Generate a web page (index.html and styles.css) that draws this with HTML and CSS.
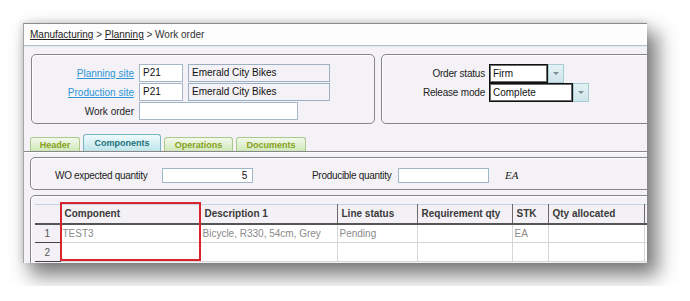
FILE: index.html
```html
<!DOCTYPE html>
<html>
<head>
<meta charset="utf-8">
<link rel="stylesheet" href="styles.css">
</head>
<body>
<div class="window">
  <div class="crumbs"><a>Manufacturing</a> &gt; <a>Planning</a> &gt; Work order</div>
  <div class="top">
    <div class="box site-box">
      <div class="row"><a class="lbl link">Planning site</a><span class="inp code">P21</span><span class="inp desc">Emerald City Bikes</span></div>
      <div class="row"><a class="lbl link">Production site</a><span class="inp code">P21</span><span class="inp desc">Emerald City Bikes</span></div>
      <div class="row"><span class="lbl">Work order</span><span class="inp wo"></span></div>
    </div>
    <div class="box status-box">
      <div class="row2"><span class="lbl">Order status</span><span class="combo"><span class="val firm">Firm</span><span class="btn"><span class="arrow"></span></span></span></div>
      <div class="row2"><span class="lbl">Release mode</span><span class="combo"><span class="val complete">Complete</span><span class="btn"><span class="arrow"></span></span></span></div>
    </div>
  </div>
  <div class="tabs">
    <div class="tab t-header">Header</div>
    <div class="tab active t-comp">Components</div>
    <div class="tab t-ops">Operations</div>
    <div class="tab t-docs">Documents</div>
  </div>
  <div class="box qty-box">
    <span class="q-lbl1">WO expected quantity</span>
    <span class="inp q-inp num-val">5</span>
    <span class="q-lbl2">Producible quantity</span>
    <span class="inp q-inp"></span>
    <span class="unit">EA</span>
  </div>
  <div class="box grid-box">
    <table>
      <colgroup>
        <col class="c-num"><col class="c-comp"><col class="c-desc"><col class="c-line"><col class="c-req"><col class="c-stk"><col class="c-alloc"><col class="c-more">
      </colgroup>
      <tr class="head"><th class="corner"></th><th>Component</th><th>Description 1</th><th>Line status</th><th>Requirement qty</th><th>STK</th><th>Qty allocated</th><th></th></tr>
      <tr><td class="num">1</td><td>TEST3</td><td>Bicycle, R330, 54cm, Grey</td><td>Pending</td><td></td><td>EA</td><td></td><td></td></tr>
      <tr><td class="num">2</td><td></td><td></td><td></td><td></td><td></td><td></td><td></td></tr>
    </table>
  </div>
  <div class="highlight"></div>
</div>
</body>
</html>
```
FILE: styles.css
```css
body {
  margin: 0;
  padding: 23px;
  background: #ffffff;
  font-family: "Liberation Sans", Arial, sans-serif;
}

.window {
  position: relative;
  width: 623px;
  height: 239px;
  border-top: 1px solid #8c8c8c;
  border-left: 1px solid #a4a4a4;
  background: #f4f2f6;
  overflow: hidden;
  box-shadow: 9px 11px 18px 2px rgba(0, 0, 0, 0.5), -1px -1px 7px rgba(0, 0, 0, 0.14);
}

.crumbs {
  height: 21px;
  line-height: 21px;
  padding-left: 6px;
  background: #fdfdfd;
  border-bottom: 1px solid #b5c4cf;
  box-shadow: 0 1px 0 #e2e9ee;
  font-size: 10px;
  color: #333;
}

.crumbs a {
  color: #222;
  text-decoration: underline;
}

.top {
  display: flex;
  gap: 6px;
  margin: 8px 0 0 7px;
}

.box {
  border: 1px solid #858585;
  border-radius: 5px;
  box-shadow: inset 1px 1px 0 #ffffff;
  box-sizing: border-box;
}

.site-box {
  flex: none;
  width: 344px;
  height: 70px;
  padding-top: 9px;
  display: flex;
  flex-direction: column;
  gap: 1px;
}

.status-box {
  flex: none;
  width: 300px;
  height: 70px;
  padding-top: 9px;
  display: flex;
  flex-direction: column;
}

.row {
  display: flex;
  align-items: center;
  height: 18px;
}

.row2 {
  display: flex;
  align-items: center;
  height: 19px;
}

.lbl {
  flex: none;
  width: 102px;
  margin-right: 5px;
  text-align: right;
  font-size: 10px;
  color: #222;
}

.link {
  color: #2b95d6;
  text-decoration: underline;
}

.status-box .lbl {
  width: 103px;
  margin-right: 4px;
  letter-spacing: -0.2px;
}

.inp {
  flex: none;
  box-sizing: border-box;
  height: 18px;
  line-height: 16px;
  border: 1px solid #a3b7c8;
  background: #ffffff;
  font-size: 10px;
  padding-left: 3px;
  color: #111;
}

.code {
  width: 44px;
  margin-right: 5px;
}

.desc {
  width: 142px;
  background: #f4f2f6;
  border-color: #9bb0c3;
}

.wo {
  width: 159px;
}

.combo {
  display: flex;
  height: 19px;
}

.val {
  box-sizing: border-box;
  height: 19px;
  line-height: 17px;
  border: 1px solid #111;
  box-shadow: inset 0 0 0 1px #6a6a6a;
  background: #ffffff;
  font-size: 10px;
  padding-left: 3px;
  color: #111;
}

.firm {
  width: 59px;
}

.complete {
  width: 84px;
}

.btn {
  box-sizing: border-box;
  width: 16px;
  height: 19px;
  border: 1px solid #a9ccd4;
  background: linear-gradient(#e3f1f4, #cfe5ea);
  display: flex;
  align-items: center;
  justify-content: center;
}

.arrow {
  width: 0;
  height: 0;
  border-left: 3px solid transparent;
  border-right: 3px solid transparent;
  border-top: 3px solid #7d8c92;
}

.tabs {
  display: flex;
  align-items: flex-end;
  gap: 3px;
  height: 17px;
  margin-top: 10px;
  padding-left: 6px;
  border-bottom: 1px solid #888;
  box-shadow: 0 1px 0 #ffffff;
}

.tab {
  box-sizing: border-box;
  height: 14px;
  border: 1px solid #a9c98d;
  border-bottom: none;
  border-radius: 3px 3px 0 0;
  background: linear-gradient(#f3f9ec, #cfe7b8);
  color: #86a11b;
  font-weight: bold;
  font-size: 9px;
  display: flex;
  align-items: center;
  justify-content: center;
}

.tab.active {
  height: 17px;
  border-color: #76b6c0;
  background: linear-gradient(#f0fbfd, #bde4ea);
  color: #22707a;
}

.t-header { width: 50px; }
.t-comp { width: 78px; }
.t-ops { width: 69px; }
.t-docs { width: 70px; }

.qty-box {
  display: flex;
  align-items: flex-start;
  width: 640px;
  height: 33px;
  margin: 5px 0 0 6px;
  padding: 10px 0 0 24px;
  border-radius: 5px 0 0 5px;
  font-size: 10px;
  letter-spacing: -0.3px;
  color: #222;
}

.q-lbl1 {
  width: 107px;
  line-height: 15px;
}

.q-lbl2 {
  width: 86px;
  margin-left: 59px;
  line-height: 15px;
}

.q-inp {
  width: 91px;
  height: 15px;
  line-height: 13px;
  border-color: #9fb6c8;
}

.num-val {
  text-align: right;
  padding-right: 5px;
}

.unit {
  margin-left: 16px;
  font-family: "Liberation Serif", "Times New Roman", serif;
  font-style: italic;
  font-size: 11px;
  line-height: 15px;
  letter-spacing: 0;
  color: #222;
}

.grid-box {
  width: 640px;
  height: 90px;
  margin: 5px 0 0 6px;
  padding: 8px 0 0 4px;
  border-radius: 5px 0 0 0;
}

table {
  border-collapse: collapse;
  table-layout: fixed;
  width: 709px;
  font-size: 10px;
}

.c-num { width: 25px; }
.c-comp { width: 140px; }
.c-desc { width: 137px; }
.c-line { width: 80px; }
.c-req { width: 95px; }
.c-stk { width: 36px; }
.c-alloc { width: 96px; }
.c-more { width: 100px; }

tr {
  height: 19px;
}

th {
  background: #f3f1f5;
  border-top: 1px solid #c4d4e2;
  border-right: 1px solid #6a6a6a;
  border-bottom: 2px solid #555;
  text-align: left;
  padding: 0 4px;
  color: #3a3a3a;
  font-weight: bold;
  white-space: nowrap;
  overflow: hidden;
}

th.corner {
  border-right: 1px solid #9a9a9a;
}

td {
  background: #ffffff;
  border-right: 1px solid #d6d6d6;
  border-bottom: 1px solid #d6d6d6;
  color: #8a8a8a;
  padding: 0 2px;
  white-space: nowrap;
  overflow: hidden;
}

td.num {
  text-align: center;
  background: #f3f1f5;
  color: #555;
  border-bottom: 1px solid #444;
  border-right: 1px solid #9a9a9a;
}

.highlight {
  position: absolute;
  left: 36px;
  top: 178px;
  width: 141px;
  height: 59px;
  box-sizing: border-box;
  border: 2px solid #d9232e;
}
```
